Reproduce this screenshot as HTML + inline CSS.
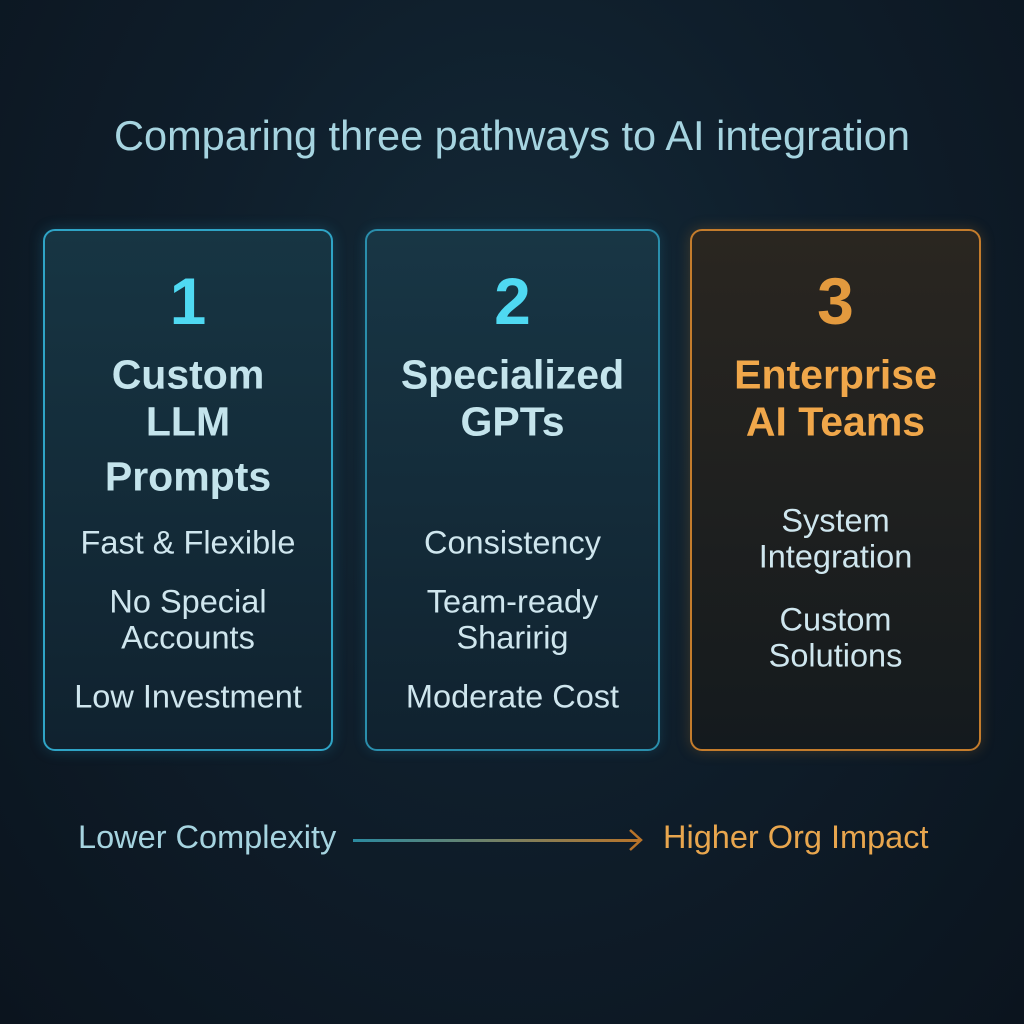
<!DOCTYPE html>
<html><head><meta charset="utf-8"><style>
*{margin:0;padding:0;box-sizing:border-box}
body{width:1024px;height:1024px;overflow:hidden;font-family:"Liberation Sans",sans-serif;
background:radial-gradient(ellipse at 50% 35%,#142a38 0%,#0f1e2b 45%,#0b141e 100%);position:relative}
.t{position:absolute;left:0;width:100%;text-align:center;white-space:nowrap;transform:translateY(-50%)}
.card{position:absolute;top:229px;height:522px;border-radius:12px;border:2px solid}
.c1{left:43px;width:290px;border-color:#2fa4c6;background:linear-gradient(180deg,#173543,#10222f);box-shadow:0 0 14px rgba(40,160,200,.25)}
.c2{left:365px;width:295px;border-color:#2a8eac;background:linear-gradient(180deg,#183645,#10222f);box-shadow:0 0 12px rgba(40,160,200,.2)}
.c3{left:690px;width:291px;border-color:#c47c2c;background:linear-gradient(180deg,#2a2620,#141a1e);box-shadow:0 0 14px rgba(200,130,40,.25)}
.num{font-size:66px;font-weight:bold}
.h{font-size:41px;font-weight:bold}
.b{font-size:32.5px;color:#cfe6ee}
</style></head><body>
<div class="t" style="top:136px;font-size:41.5px;color:#a6d4e0">Comparing three pathways to AI integration</div>

<div class="card c1">
<div class="t num" style="top:70px;color:#4fd9f2">1</div>
<div class="t h" style="top:144px;color:#c4e4ec">Custom</div>
<div class="t h" style="top:191px;color:#c4e4ec">LLM</div>
<div class="t h" style="top:246px;color:#c4e4ec">Prompts</div>
<div class="t b" style="top:312px">Fast &amp; Flexible</div>
<div class="t b" style="top:371px">No Special</div>
<div class="t b" style="top:407px">Accounts</div>
<div class="t b" style="top:466px">Low Investment</div>
</div>

<div class="card c2">
<div class="t num" style="top:70px;color:#4fd9f2">2</div>
<div class="t h" style="top:144px;color:#c4e4ec">Specialized</div>
<div class="t h" style="top:191px;color:#c4e4ec">GPTs</div>
<div class="t b" style="top:312px">Consistency</div>
<div class="t b" style="top:371px">Team-ready</div>
<div class="t b" style="top:407px">Sharirig</div>
<div class="t b" style="top:466px">Moderate Cost</div>
</div>

<div class="card c3">
<div class="t num" style="top:70px;color:#e39a3e">3</div>
<div class="t h" style="top:144px;color:#f0a74a">Enterprise</div>
<div class="t h" style="top:191px;color:#f0a74a">AI Teams</div>
<div class="t b" style="top:290px">System</div>
<div class="t b" style="top:326px">Integration</div>
<div class="t b" style="top:389px">Custom</div>
<div class="t b" style="top:425px">Solutions</div>
</div>

<div style="position:absolute;left:78px;top:819px;font-size:32.5px;color:#a6d4e0">Lower Complexity</div>
<div style="position:absolute;left:353px;top:839px;width:287px;height:3px;background:linear-gradient(90deg,#2b8aa0,#7a8060 55%,#b8742a)"></div>
<svg style="position:absolute;left:620px;top:825px" width="30" height="30">
<polyline points="10,5 21,15 10,25" fill="none" stroke="#b8742a" stroke-width="2.5"/>
</svg>
<div style="position:absolute;left:663px;top:819px;font-size:32.5px;color:#e8a64e">Higher Org Impact</div>
</body></html>
